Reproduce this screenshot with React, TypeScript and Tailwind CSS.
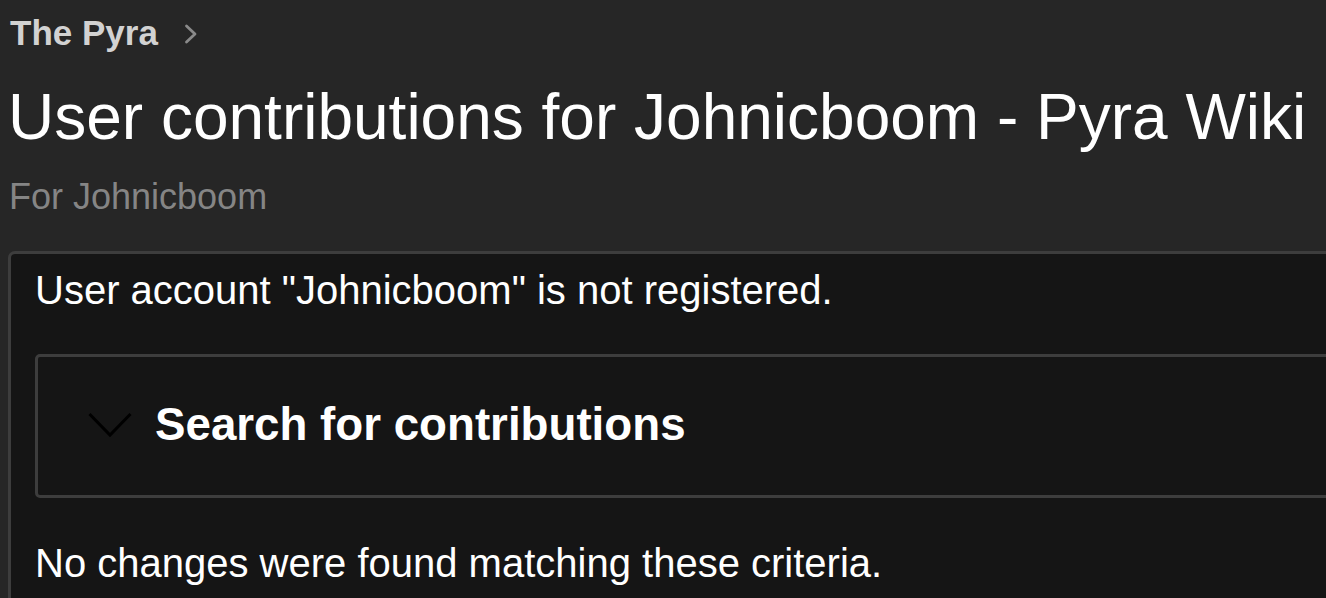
const FONT = "font-['Liberation_Sans',Arial,sans-serif]";

function Crumb(): React.ReactElement {
  return (
    <nav className="flex items-center pl-[10px] pt-[13px]">
      <span className="text-[35px] leading-[40px] font-bold text-[#d2d2d2]">The Pyra</span>
      <svg width="15" height="20" viewBox="0 0 15 20" className="ml-[25px] mt-[2px]" aria-hidden="true">
        <polyline points="3.5,2 12,10 3.5,18" fill="none" stroke="#8a8a8a" strokeWidth="2.8" strokeLinecap="round" strokeLinejoin="round" />
      </svg>
    </nav>
  );
}

function SearchBox(): React.ReactElement {
  return (
    <div className="mt-[41px] rounded-[5px] border-[3px] border-[#3d3d3d]">
      <div className="flex items-center pl-[50px] pt-[42px] pb-[44px]">
        <svg width="44" height="26" viewBox="0 0 44 26" aria-hidden="true">
          <polyline points="1.5,2 22,23 42.5,2" fill="none" stroke="#000" strokeWidth="3" />
        </svg>
        <h2 className="ml-[23px] text-[45.7px] leading-[52px] font-bold text-white">Search for contributions</h2>
      </div>
    </div>
  );
}

export default function App(): React.ReactElement {
  return (
    <div className={`${FONT} min-h-[598px] w-full overflow-hidden bg-[#262626]`}>
      <Crumb />
      <h1 className="mt-[28px] pl-[8px] text-[64px] leading-[72px] font-normal text-white whitespace-nowrap">
        User contributions for Johnicboom - Pyra Wiki
      </h1>
      <p className="mt-[24px] pl-[9px] text-[36px] leading-[40px] text-[#858585]">For Johnicboom</p>
      <section className="ml-[8px] mt-[34px] w-[1400px] rounded-[7px] border-[3px] border-[#3d3d3d] bg-[#151515] pl-[24px] pt-[13px] pb-[20px]">
        <p className="text-[40px] leading-[46px] text-white">User account "Johnicboom" is not registered.</p>
        <SearchBox />
        <p className="mt-[42px] text-[40px] leading-[46px] text-white">No changes were found matching these criteria.</p>
      </section>
    </div>
  );
}
